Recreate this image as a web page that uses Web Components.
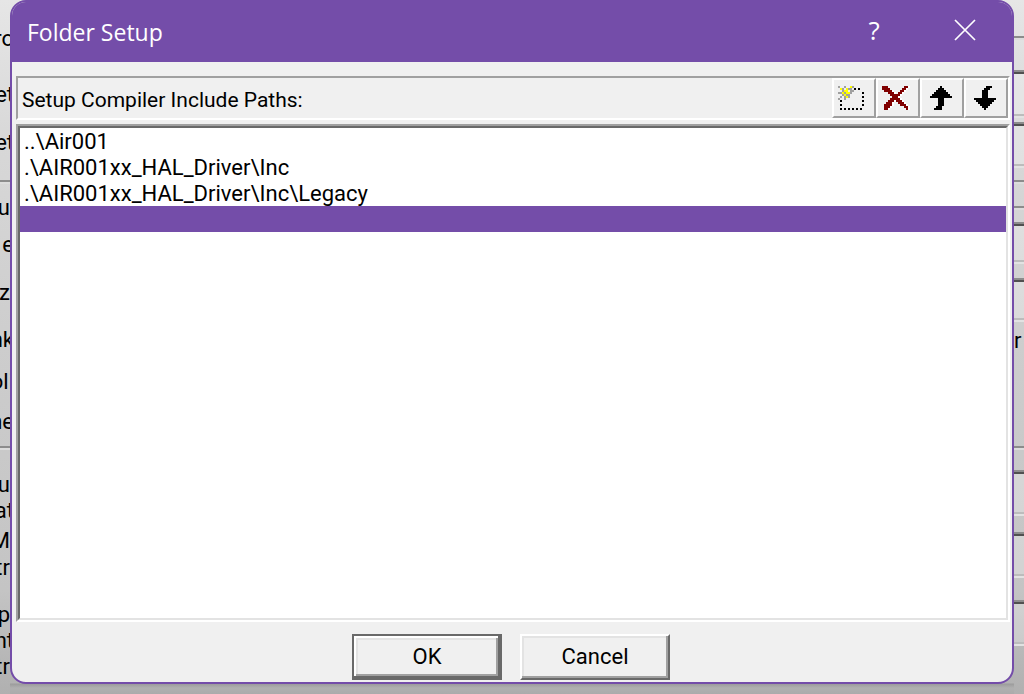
<!DOCTYPE html>
<html lang="en">
<head>
<meta charset="utf-8">
<title>Folder Setup</title>
<style>
html, body { margin: 0; min-height: 100%; }
body { font: 22px/26px Roboto, "Liberation Sans", sans-serif; color: #000; overflow: hidden; }
</style>
</head>
<body>
<app-desktop>
  <options-edge slot="left" side="left"></options-edge>
  <setup-dialog heading="Folder Setup">
    <tool-strip slot="bar" label="Setup Compiler Include Paths:"></tool-strip>
    <path-list slot="list"></path-list>
    <push-button slot="actions" primary>OK</push-button>
    <push-button slot="actions">Cancel</push-button>
  </setup-dialog>
  <options-edge slot="right" side="right"></options-edge>
</app-desktop>
<script>
class Base extends HTMLElement {
  connectedCallback() {
    if (!this.shadowRoot) this.attachShadow({ mode: "open" }).innerHTML = this.view();
  }
}

customElements.define("app-desktop", class extends Base {
  view() { return `<style>
    :host { display: grid; grid-template-columns: 10px minmax(0, 1fr) 10px; height: 100vh; box-sizing: border-box;
      background: linear-gradient(#e6e6e6, #d8d8d8 20%, #cdcdcd 50%, #c4c4c4 85%, #b0b0b0); }
    main { padding-bottom: 10px; display: grid;
      background: linear-gradient(transparent calc(100% - 11px), #9c9c9c calc(100% - 10px), #b0b0b0 calc(100% - 6px), #ababab); }
  </style><slot name="left"></slot><main><slot></slot></main><slot name="right"></slot>`; }
});

/* Strip of the options window that shows beside the dialog; each row is [kind, height, text]. */
const EDGE = {
  left: [["t over",52,"ro"],["t over",56,"et"],["t over",48,"et"],["gap",24],["rule",2],["t",39,"u"],["t over",37,"e"],["t",48,"z"],
    ["t over",47,"nk"],["t over",42,"oli"],["t over",40,"ne"],["gap",11],["rule",2],["t",50,"u"],["t over",26,"at"],["t",30,"M"],
    ["t",27,"tr"],["t",47,"p"],["t over",26,"nt"],["t",26,"tr"]],
  right: [["gap",36],["rule",2],["gap",32],["box",46],["gap",6],["box",44],["gap",14],["rule",2],["gap",24],["rule",2],
    ["gap",14],["box",40],["gap",16],["box",42],["t",34,"r"],["gap",92],["rule",2],["gap",22],["box",44],["gap",18],
    ["box",44],["gap",24],["box",44]]
};
customElements.define("options-edge", class extends Base {
  view() {
    const side = this.getAttribute("side");
    return `<style>
    :host { display: flex; flex-direction: column; overflow: hidden; min-width: 0; height: 100vh; }
    div { flex: none; box-sizing: border-box; display: flex; align-items: flex-end; white-space: nowrap; }
    :host([side=left]) div { justify-content: flex-end; }
    .over { margin-right: -4px; }
    .rule { background: #8c8c8c; box-shadow: 0 2px #dcdcdc; }
    .box { border-top: 2px solid #8c8c8c; border-bottom: 2px solid #bcbcbc; box-shadow: inset 0 2px #505050, 0 2px #e2e2e2;
      background: rgba(255,255,255,.25); }
  </style>` + EDGE[side].map(([k, h, s = ""]) => `<div class="${k}" style="height:${h}px">${s}</div>`).join("");
  }
});

customElements.define("setup-dialog", class extends Base {
  view() { return `<style>
    :host { display: block; min-width: 0; }
    section { height: 100%; box-sizing: border-box; display: flex; flex-direction: column; overflow: hidden;
      border: 2px solid #744da9; border-radius: 16px; background: #f0f0f0; }
    header { flex: none; height: 60px; display: flex; align-items: center; padding: 0 19px 0 15px; background: #744da9; color: #fff; }
    h1 { flex: 1; margin: 0; font: 400 23px/30px "Open Sans", "Noto Sans", sans-serif; }
    header button { width: 56px; height: 48px; padding: 0; border: 0; background: none; color: #fff;
      font: 26px/48px "Open Sans", sans-serif; display: grid; place-items: center; }
    .controls { display: flex; gap: 35px; padding-bottom: 4px; }
    .body { flex: 1; min-height: 0; display: flex; flex-direction: column; gap: 4px; padding: 14px 2px 12px 4px; }
    ::slotted([slot=list]) { flex: 1; min-height: 0; }
    footer { flex: none; display: flex; justify-content: center; gap: 18px; padding: 0 2px 2px 0; }
  </style>
  <section role="dialog" aria-labelledby="h">
    <header><h1 id="h">${this.getAttribute("heading")}</h1>
      <div class="controls"><button aria-label="Help">?</button>
      <button aria-label="Close"><svg width="22" height="22" viewBox="0 0 22 22"><path d="M1 1 21 21M21 1 1 21" stroke="#fff" stroke-width="1.7"/></svg></button></div>
    </header>
    <div class="body"><slot name="bar"></slot><slot name="list"></slot></div>
    <footer><slot name="actions"></slot></footer>
  </section>`; }
});

/* Toolbar glyphs on a grid of 2px cells: K black, R dark red, G grey, Y yellow, W white. */
const INK = { K: "#000", R: "#800000", G: "#a0a0a0", Y: "#ffff00", W: "#fff" };
const GLYPHS = {
  "New path": [6, 8, [
    "G..G..YG.....", ".YG.YGG.K.K..", "..GYY.GG.....", "GGYGYYG.....K", "..GYGG.......", ".G.GYG......K",
    "G..G.........", ".K..........K", ".............", ".K..........K", ".............", ".K.K.K.K.K.K."]],
  "Delete path": [6, 8, [
    "RRR........RRW", "RRRR......RRW.", ".RRRRW...RRW..", "...RRRW.RRW...", "....RRRRRW....", ".....RRRW.....",
    "....RRRRRW....", "...RRRWRRRW...", "..RRRW..RRRW..", ".RRRRW...RRRW.", ".RRRW......RRW", ".RRW........RW"]],
  "Move up": [10, 8, [
    ".....K.....", "....KKK....", "...KKKKK...", "..KKKKKKK..", ".KKKKKKKKK.", "KKKKKKKKKKK",
    "....KKK....", "....KKK....", "....KKK....", "....KKK....", "...KKK.....", "..KKKK....."]],
  "Move down": [10, 8, [
    "......KKK..", ".....KKK...", "....KKK....", "....KKK....", "....KKK....", "....KKK....",
    "KKKKKKKKKKK", ".KKKKKKKKK.", "..KKKKKKK..", "...KKKKK...", "....KKK....", ".....K....."]]
};
function glyph([x0, y0, rows]) {
  let out = "";
  for (const ink in INK) {
    let d = "";
    rows.forEach((row, y) => [...row].forEach((c, x) => { if (c === ink) d += `M${x0 + 2 * x} ${y0 + 2 * y}h2v2h-2z`; }));
    if (d) out += `<path fill="${INK[ink]}" d="${d}"/>`;
  }
  return `<svg width="44" height="40" viewBox="0 0 44 40" shape-rendering="crispEdges">${out}</svg>`;
}
customElements.define("tool-strip", class extends Base {
  view() { return `<style>
    :host { flex: none; display: flex; box-sizing: border-box; height: 44px; align-items: center; font-size: 21px;
      border: 2px solid; border-color: #a0a0a0 #fff #fff #a0a0a0; padding-left: 4px; }
    span { flex: 1; white-space: nowrap; padding-top: 4px; }
    div { display: flex; }
    button { width: 44px; height: 40px; padding: 0; box-sizing: border-box; background: #f0f0f0;
      border: 2px solid; border-color: #fff #a0a0a0 #a0a0a0 #fff; }
    svg { display: block; margin: -2px; }
  </style><span>${this.getAttribute("label")}</span><div role="toolbar">${
    Object.keys(GLYPHS).map(k => `<button aria-label="${k}">${glyph(GLYPHS[k])}</button>`).join("")}</div>`; }
});

customElements.define("path-list", class extends Base {
  view() { return `<style>
    :host { display: block; border: 2px solid; border-color: #a0a0a0 #fff #fff #a0a0a0; }
    ul { height: 100%; box-sizing: border-box; margin: 0; padding: 0; list-style: none; background: #fff;
      border: 2px solid; border-color: #696969 #e3e3e3 #e3e3e3 #696969; }
    li { height: 26px; padding-left: 4px; line-height: 28px; white-space: nowrap; }
    li[aria-selected=true] { background: #744da9; }
  </style><ul role="listbox" aria-label="Include paths" tabindex="0">
    <li role="option">..\\Air001</li><li role="option">.\\AIR001xx_HAL_Driver\\Inc</li>
    <li role="option">.\\AIR001xx_HAL_Driver\\Inc\\Legacy</li><li role="option" aria-selected="true"></li></ul>`; }
});

customElements.define("push-button", class extends Base {
  view() { return `<style>
    :host { display: block; width: 150px; height: 46px; }
    button { width: 100%; height: 100%; padding: 0; font: inherit; color: #000; background: #f0f0f0;
      border: 2px solid; border-color: #fff #696969 #696969 #fff;
      box-shadow: inset -2px -2px #a0a0a0, inset 2px 2px #e3e3e3; }
    :host([primary]) button { border-color: #696969;
      box-shadow: inset -2px -2px #696969, inset 2px 2px #fff, inset -4px -4px #a0a0a0, inset 4px 4px #e3e3e3; }
  </style><button><slot></slot></button>`; }
});
</script>
</body>
</html>
